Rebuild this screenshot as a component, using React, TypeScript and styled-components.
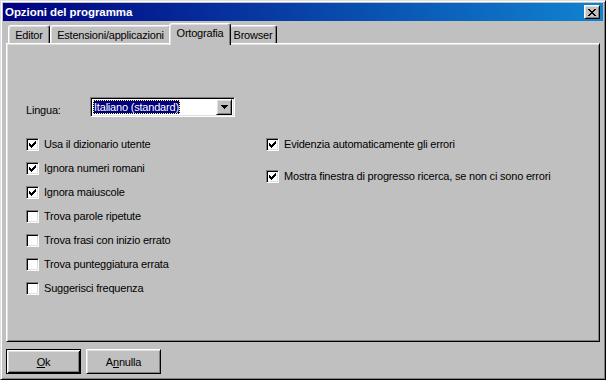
import React from "react";
import styled, { createGlobalStyle, css } from "styled-components";

const Global = createGlobalStyle`
  html, body { margin: 0; padding: 0; background: #c0c0c0; }
  body { font-family: "Liberation Sans", Arial, sans-serif; font-size: 11px; letter-spacing: -0.2px; color: #000; }
`;

const Window = styled.div`
  width: 606px;
  height: 380px;
  box-sizing: border-box;
  display: flex;
  flex-direction: column;
  padding: 2px;
  background: #c0c0c0;
  border: 1px solid;
  border-color: #dfdfdf #000 #000 #dfdfdf;
  box-shadow: inset 1px 1px #fff, inset -1px -1px #808080;
`;

const TitleBar = styled.div`
  height: 18px;
  display: flex;
  align-items: center;
  justify-content: space-between;
  padding: 0 3px 0 2px;
  background: linear-gradient(90deg, #000080 0%, #1084d0 100%);
`;

const Title = styled.span`
  color: #fff;
  font-weight: bold;
  font-size: 11.5px;
  letter-spacing: -0.05px;
`;

const raised = css`
  border: 1px solid;
  border-color: #fff #000 #000 #fff;
  box-shadow: inset 1px 1px #dfdfdf, inset -1px -1px #808080;
`;

const CloseButton = styled.div`
  width: 16px;
  height: 14px;
  box-sizing: border-box;
  ${raised};
  background: #c0c0c0;
  display: flex;
  align-items: center;
  justify-content: center;
`;

const Body = styled.div`
  flex: 1;
  display: flex;
  flex-direction: column;
  padding: 2px 1px 3px 1px;
  margin: 0 2px;
`;

const TabStrip = styled.div`
  height: 20px;
  display: flex;
  align-items: flex-end;
  padding-left: 2px;
`;

const Tab = styled.div<{ $w: number; $active?: boolean }>`
  width: ${(p) => p.$w}px;
  height: ${(p) => (p.$active ? 22 : 18)}px;
  box-sizing: border-box;
  display: flex;
  justify-content: center;
  align-items: ${(p) => (p.$active ? "flex-start" : "center")};
  padding-top: ${(p) => (p.$active ? 3 : 1)}px;
  background: #c0c0c0;
  border-top: 1px solid #fff;
  border-left: 1px solid #fff;
  border-right: 1px solid #000;
  border-radius: 3px 3px 0 0;
  box-shadow: inset -1px 0 #808080, inset 1px 1px #dfdfdf;
  white-space: nowrap;
  ${(p) =>
    p.$active &&
    css`
      margin: 0 -2px -2px -2px;
      position: relative;
      z-index: 1;
    `}
`;

const Panel = styled.div`
  flex: 1;
  box-sizing: border-box;
  border: 1px solid;
  border-color: #fff #000 #000 #fff;
  box-shadow: inset 1px 1px #dfdfdf, inset -1px -1px #808080;
  padding: 53px 0 0 19px;
  display: flex;
  flex-direction: column;
`;

const LinguaRow = styled.div`
  height: 20px;
  display: flex;
  align-items: center;
`;

const Label = styled.span`
  width: 64px;
  padding-top: 6px;
`;

const sunken = css`
  border: 1px solid;
  border-color: #808080 #fff #fff #808080;
  box-shadow: inset 1px 1px #000, inset -1px -1px #dfdfdf;
`;

const Select = styled.div`
  width: 145px;
  height: 20px;
  box-sizing: border-box;
  ${sunken};
  background: #fff;
  display: flex;
  align-items: center;
  padding: 2px;
`;

const SelectValue = styled.div`
  flex: 1;
  height: 100%;
  display: flex;
  align-items: stretch;
`;

const Highlight = styled.span`
  background: #000080;
  color: #fff;
  outline: 1px dotted #ffff80;
  outline-offset: -1px;
  padding: 0 1px 0 1px;
  display: flex;
  align-items: center;
`;

const ArrowButton = styled.div`
  width: 16px;
  height: 16px;
  box-sizing: border-box;
  ${raised};
  background: #c0c0c0;
  display: flex;
  align-items: center;
  justify-content: center;
`;

const Columns = styled.div`
  margin-top: 21px;
  display: grid;
  grid-template-columns: 240px 1fr;
`;

const Column = styled.div<{ $gap: number }>`
  display: flex;
  flex-direction: column;
  gap: ${(p) => p.$gap}px;
`;

const CheckRow = styled.div`
  height: 13px;
  display: flex;
  align-items: center;
  gap: 5px;
  white-space: nowrap;
`;

const CheckText = styled.span`
  margin-top: -1px;
`;

const Box = styled.div`
  width: 13px;
  height: 13px;
  box-sizing: border-box;
  ${sunken};
  background: #fff;
  display: flex;
  align-items: center;
  justify-content: center;
  flex: none;
`;

const ButtonRow = styled.div`
  margin-top: 7px;
  display: flex;
  gap: 5px;
`;

const Button = styled.div<{ $default?: boolean }>`
  width: 75px;
  height: 25px;
  box-sizing: border-box;
  display: flex;
  align-items: center;
  justify-content: center;
  background: #c0c0c0;
  ${(p) =>
    p.$default
      ? css`
          border: 1px solid #000;
          box-shadow: inset 1px 1px #fff, inset -1px -1px #000, inset 2px 2px #dfdfdf,
            inset -2px -2px #808080;
        `
      : raised}
`;

const Pixels = ({ rows, color = "#000" }: { rows: string[]; color?: string }) => (
  <svg
    width={rows[0].length}
    height={rows.length}
    viewBox={`0 0 ${rows[0].length} ${rows.length}`}
    shapeRendering="crispEdges"
  >
    {rows.flatMap((r, y) =>
      r.split("").map((c, x) =>
        c === "X" ? <rect key={`${x}-${y}`} x={x} y={y} width={1} height={1} fill={color} /> : null
      )
    )}
  </svg>
);

const CHECK = ["......X", ".....XX", "X...XXX", "XX.XXX.", "XXXXX..", ".XXX...", "..X...."];
const CLOSE = ["XX....XX", ".XX..XX.", "..XXXX..", "...XX...", "..XXXX..", ".XX..XX.", "XX....XX"];
const ARROW = ["XXXXXXX", ".XXXXX.", "..XXX..", "...X..."];

const Check = ({ checked, label }: { checked?: boolean; label: string }) => (
  <CheckRow>
    <Box>{checked && <Pixels rows={CHECK} />}</Box>
    <CheckText>{label}</CheckText>
  </CheckRow>
);

export default function App() {
  return (
    <>
      <Global />
      <Window>
        <TitleBar>
          <Title>Opzioni del programma</Title>
          <CloseButton>
            <Pixels rows={CLOSE} />
          </CloseButton>
        </TitleBar>
        <Body>
          <TabStrip>
            <Tab $w={42}>Editor</Tab>
            <Tab $w={121}>Estensioni/applicazioni</Tab>
            <Tab $w={62} $active>
              Ortografia
            </Tab>
            <Tab $w={48}>Browser</Tab>
          </TabStrip>
          <Panel>
            <LinguaRow>
              <Label>Lingua:</Label>
              <Select>
                <SelectValue>
                  <Highlight>Italiano (standard)</Highlight>
                </SelectValue>
                <ArrowButton>
                  <Pixels rows={ARROW} />
                </ArrowButton>
              </Select>
            </LinguaRow>
            <Columns>
              <Column $gap={11}>
                <Check checked label="Usa il dizionario utente" />
                <Check checked label="Ignora numeri romani" />
                <Check checked label="Ignora maiuscole" />
                <Check label="Trova parole ripetute" />
                <Check label="Trova frasi con inizio errato" />
                <Check label="Trova punteggiatura errata" />
                <Check label="Suggerisci frequenza" />
              </Column>
              <Column $gap={19}>
                <Check checked label="Evidenzia automaticamente gli errori" />
                <Check checked label="Mostra finestra di progresso ricerca, se non ci sono errori" />
              </Column>
            </Columns>
          </Panel>
          <ButtonRow>
            <Button $default>
              <span>
                <u>O</u>k
              </span>
            </Button>
            <Button>
              <span>
                A<u>n</u>nulla
              </span>
            </Button>
          </ButtonRow>
        </Body>
      </Window>
    </>
  );
}
